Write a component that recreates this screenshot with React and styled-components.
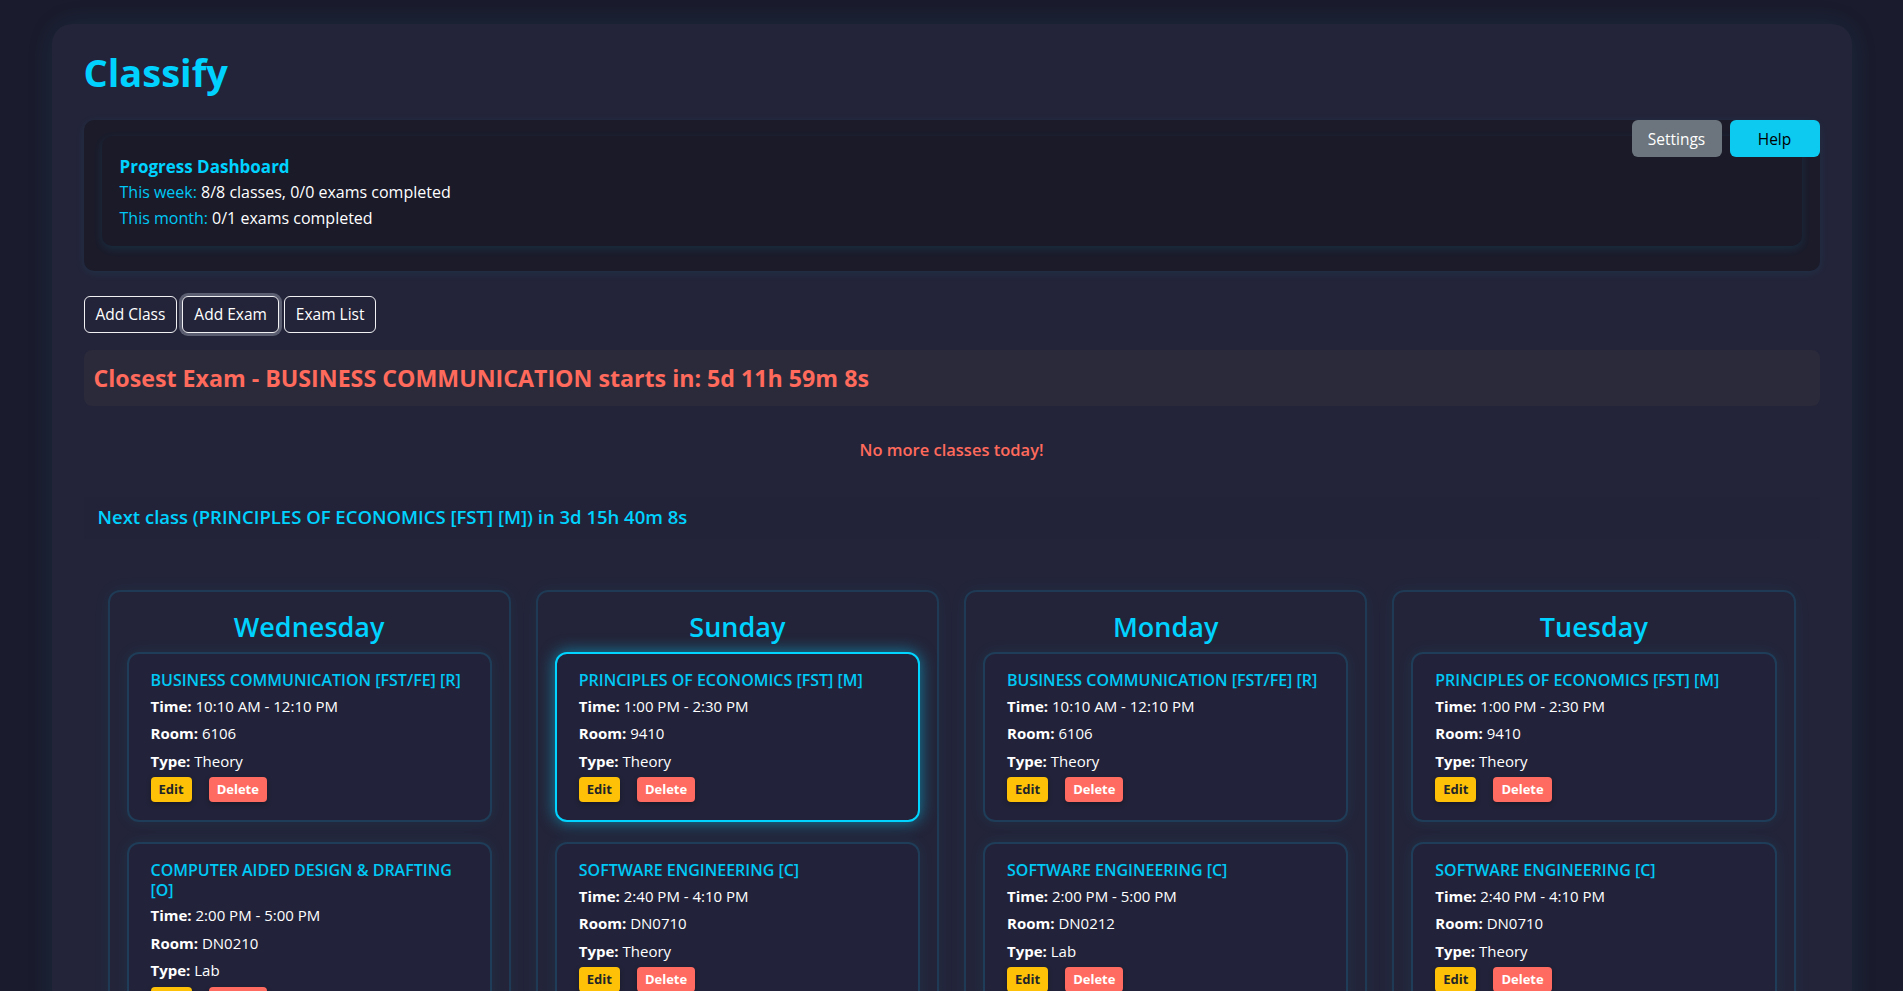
import React from "react";
import styled, { createGlobalStyle, css } from "styled-components";

const GlobalStyle = createGlobalStyle`
    html {
        scrollbar-width: none;
    }
    html::-webkit-scrollbar {
        display: none;
    }
    body {
        margin: 0;
        background: #1a1b2c;
        color: #ffffff;
        font-family: "Segoe UI", "Open Sans", sans-serif;
        line-height: 1.5;
    }
    * {
        box-sizing: border-box;
    }
`;

const schedule = [
    {
        day: "Wednesday",
        classes: [
            { name: "BUSINESS COMMUNICATION [FST/FE] [R]", time: "10:10 AM - 12:10 PM", room: "6106", type: "Theory" },
            { name: "COMPUTER AIDED DESIGN & DRAFTING [O]", time: "2:00 PM - 5:00 PM", room: "DN0210", type: "Lab" },
        ],
    },
    {
        day: "Sunday",
        classes: [
            { name: "PRINCIPLES OF ECONOMICS [FST] [M]", time: "1:00 PM - 2:30 PM", room: "9410", type: "Theory", next: true },
            { name: "SOFTWARE ENGINEERING [C]", time: "2:40 PM - 4:10 PM", room: "DN0710", type: "Theory" },
        ],
    },
    {
        day: "Monday",
        classes: [
            { name: "BUSINESS COMMUNICATION [FST/FE] [R]", time: "10:10 AM - 12:10 PM", room: "6106", type: "Theory" },
            { name: "SOFTWARE ENGINEERING [C]", time: "2:00 PM - 5:00 PM", room: "DN0212", type: "Lab" },
        ],
    },
    {
        day: "Tuesday",
        classes: [
            { name: "PRINCIPLES OF ECONOMICS [FST] [M]", time: "1:00 PM - 2:30 PM", room: "9410", type: "Theory" },
            { name: "SOFTWARE ENGINEERING [C]", time: "2:40 PM - 4:10 PM", room: "DN0710", type: "Theory" },
        ],
    },
];

const App = () => {
    return (
        <React.Fragment>
            <GlobalStyle />
            <Page>
                <Container>
                    <Title>Classify</Title>

                    <ProgressPanel>
                        <TopActions>
                            <TopButton variant="settings">Settings</TopButton>
                            <TopButton variant="help">Help</TopButton>
                        </TopActions>
                        <ProgressCard>
                            <ProgressHeading>Progress Dashboard</ProgressHeading>
                            <ProgressLine>
                                <Label>This week:</Label> 8/8 classes, 0/0 exams completed
                            </ProgressLine>
                            <ProgressLine>
                                <Label>This month:</Label> 0/1 exams completed
                            </ProgressLine>
                        </ProgressCard>
                    </ProgressPanel>

                    <ActionBar>
                        <OutlineButton>Add Class</OutlineButton>
                        <OutlineButton focused>Add Exam</OutlineButton>
                        <OutlineButton>Exam List</OutlineButton>
                    </ActionBar>

                    <ExamBanner>
                        Closest Exam - BUSINESS COMMUNICATION starts in: 5d 11h 59m 8s
                    </ExamBanner>

                    <NoClasses>No more classes today!</NoClasses>

                    <NextClass>
                        Next class (PRINCIPLES OF ECONOMICS [FST] [M]) in 3d 15h 40m 8s
                    </NextClass>

                    <ScheduleGrid>
                        {schedule.map(col => (
                            <DayColumn key={col.day}>
                                <DayTitle>{col.day}</DayTitle>
                                <CardList>
                                    {col.classes.map((c, i) => (
                                        <ClassCard key={i} active={c.next}>
                                            <CourseName>{c.name}</CourseName>
                                            <Detail>
                                                <strong>Time:</strong> {c.time}
                                            </Detail>
                                            <Detail>
                                                <strong>Room:</strong> {c.room}
                                            </Detail>
                                            <Detail>
                                                <strong>Type:</strong> {c.type}
                                            </Detail>
                                            <CardActions>
                                                <SmallButton kind="edit">Edit</SmallButton>
                                                <SmallButton kind="delete">Delete</SmallButton>
                                            </CardActions>
                                        </ClassCard>
                                    ))}
                                </CardList>
                            </DayColumn>
                        ))}
                    </ScheduleGrid>
                </Container>
            </Page>
        </React.Fragment>
    );
};

// page wrapper
const Page = styled.div`
    padding: 24px 0 40px;
`;

// main rounded panel
const Container = styled.div`
    width: 1800px;
    margin: 0 auto;
    padding: 24px 32px 40px;
    background: #232439;
    border-radius: 20px;
    box-shadow: 0 0 30px rgba(0, 212, 255, 0.08);
`;

const Title = styled.h1`
    margin: 0;
    font-size: 38px;
    line-height: 48px;
    font-weight: 700;
    color: #00d2ff;
`;

// progress dashboard wrapper
const ProgressPanel = styled.div`
    position: relative;
    margin-top: 24px;
    padding: 16px 18px 25px;
    background: #1b1b2a;
    border-radius: 10px;
    box-shadow: 0 2px 10px rgba(0, 212, 255, 0.08);
`;

const TopActions = styled.div`
    position: absolute;
    top: 0;
    right: 0;
    display: flex;
    gap: 8px;
`;

const TopButton = styled.button`
    width: 90px;
    height: 37px;
    border: none;
    border-radius: 6px;
    font-family: inherit;
    font-size: 15.5px;
    ${({ variant }) =>
        variant === "help"
            ? css`
                  background: #0dcaf0;
                  color: #000000;
              `
            : css`
                  background: #6c757d;
                  color: #ffffff;
              `}
`;

const ProgressCard = styled.div`
    padding: 19px 18px 15px;
    background: #1a1a29;
    border-radius: 10px;
    box-shadow: 0 3px 8px rgba(0, 212, 255, 0.1);
`;

const ProgressHeading = styled.div`
    font-size: 17px;
    line-height: 24px;
    font-weight: 700;
    color: #00d2ff;
`;

const ProgressLine = styled.div`
    font-size: 16px;
    line-height: 26px;
    color: #ffffff;
`;

const Label = styled.span`
    color: #00c8f5;
`;

// add class / add exam / exam list
const ActionBar = styled.div`
    display: flex;
    gap: 5px;
    margin-top: 25px;
`;

const OutlineButton = styled.button`
    padding: 6px 11px;
    background: transparent;
    border: 1px solid #f1f1f4;
    border-radius: 6px;
    color: #ffffff;
    font-family: inherit;
    font-size: 15.5px;
    line-height: 23px;
    ${({ focused }) =>
        focused &&
        css`
            box-shadow: 0 0 0 3px rgba(160, 165, 180, 0.45);
        `}
`;

const ExamBanner = styled.div`
    margin-top: 17px;
    padding: 10px;
    background: #2a2a3a;
    border-radius: 8px;
    font-size: 23.2px;
    line-height: 36px;
    font-weight: 700;
    color: #ff6a5c;
`;

const NoClasses = styled.div`
    margin-top: 32px;
    text-align: center;
    font-size: 16.5px;
    line-height: 24px;
    font-weight: 600;
    color: #ff6a5c;
`;

const NextClass = styled.div`
    margin-top: 35px;
    padding: 6px 14px 9px;
    background: #222338;
    font-size: 18.5px;
    line-height: 27px;
    font-weight: 600;
    color: #00d2ff;
`;

// four day columns
const ScheduleGrid = styled.div`
    display: grid;
    grid-template-columns: repeat(4, 1fr);
    gap: 25px;
    margin-top: 51px;
    padding: 0 24px;
`;

const DayColumn = styled.div`
    padding: 17px 17px 20px;
    border: 2px solid #1f3a54;
    border-radius: 12px;
    box-shadow: 0 0 18px rgba(0, 212, 255, 0.05);
`;

const DayTitle = styled.h2`
    margin: 0 0 7px;
    text-align: center;
    font-size: 27px;
    line-height: 36px;
    font-weight: 600;
    color: #00d2ff;
`;

const CardList = styled.div`
    display: flex;
    flex-direction: column;
    gap: 20px;
`;

const ClassCard = styled.div`
    padding: 17px 22px 18px;
    background: #22233a;
    border: 2px solid #1f3d58;
    border-radius: 12px;
    box-shadow: 0 0 16px rgba(0, 212, 255, 0.07);
    ${({ active }) =>
        active &&
        css`
            border-color: #00d4ff;
            box-shadow: 0 0 16px rgba(0, 212, 255, 0.55);
        `}
`;

const CourseName = styled.div`
    margin-bottom: 2px;
    font-size: 16px;
    line-height: 19.5px;
    font-weight: 600;
    color: #00c8f5;
`;

const Detail = styled.div`
    font-size: 15px;
    line-height: 27.5px;
    color: #ffffff;

    strong {
        font-weight: 700;
    }
`;

const CardActions = styled.div`
    display: flex;
    gap: 17px;
    margin-top: 2px;
`;

const SmallButton = styled.button`
    padding: 4px 8px;
    border: none;
    border-radius: 4px;
    font-family: inherit;
    font-size: 13px;
    line-height: 17px;
    font-weight: 700;
    box-shadow: 0 2px 5px rgba(0, 0, 0, 0.3);
    ${({ kind }) =>
        kind === "edit"
            ? css`
                  background: #ffc107;
                  color: #212529;
              `
            : css`
                  background: #ff6b61;
                  color: #ffffff;
              `}
`;

export default App;
